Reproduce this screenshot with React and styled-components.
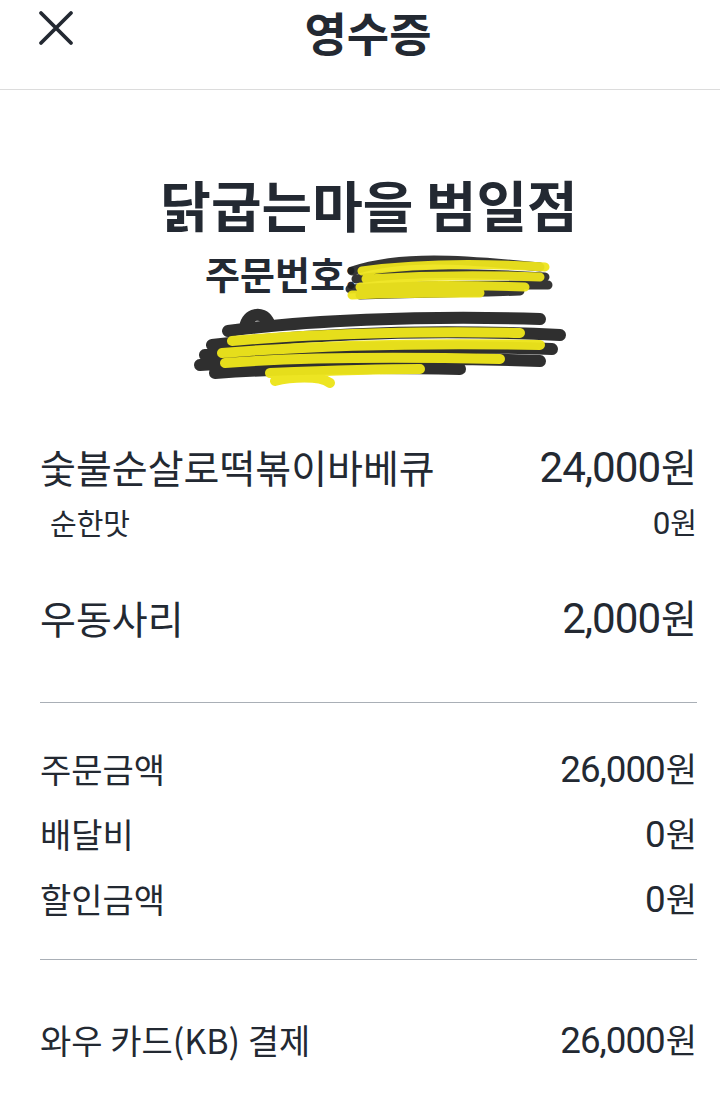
import styled, { createGlobalStyle } from "styled-components";

const Global = createGlobalStyle`
  body {
    margin: 0;
    background: #fff;
    font-family: Roboto, "Noto Sans CJK KR", sans-serif;
    color: #232932;
  }
`;

const Header = styled.header`
  height: 89px;
  border-bottom: 1px solid #dcdcdc;
  display: flex;
  align-items: flex-start;
  position: relative;
`;

const Close = styled.button`
  position: absolute;
  left: 32px;
  top: 4px;
  width: 48px;
  height: 48px;
  border: 0;
  background: none;
  padding: 0;
  display: flex;
  align-items: center;
  justify-content: center;
`;

const Title = styled.h1`
  margin: 0 0 0 16px;
  flex: 1;
  text-align: center;
  font-family: "Noto Sans CJK KR", sans-serif;
  font-weight: 700;
  font-size: 46px;
  line-height: 62px;
`;

const Store = styled.section`
  display: flex;
  flex-direction: column;
  align-items: center;
  padding-top: 77px;
`;

const StoreName = styled.h2`
  margin: 0 0 0 18px;
  font-family: "Noto Sans CJK KR", sans-serif;
  font-weight: 700;
  font-size: 55px;
  line-height: 72px;
`;

const Order = styled.div`
  position: relative;
  width: 720px;
  height: 130px;
`;

const OrderLabel = styled.span`
  position: absolute;
  left: 205px;
  top: 12px;
  font-family: "Noto Sans CJK KR", sans-serif;
  font-weight: 700;
  font-size: 38px;
  line-height: 44px;
`;

const Scribble = styled.svg`
  position: absolute;
  left: 0;
  top: 10px;
`;

const Content = styled.main`
  padding: 69px 23px 0 40px;
`;

const Group = styled.div`
  display: flex;
  flex-direction: column;
  gap: ${(p) => p.$gap || 0}px;
  padding: ${(p) => p.$pad};
  border-bottom: ${(p) => (p.$line ? "1px solid #a9afb6" : "none")};
`;

const Row = styled.div`
  display: flex;
  justify-content: space-between;
  align-items: center;
  height: ${(p) => p.$lh}px;
  font-size: ${(p) => p.$size}px;
  line-height: ${(p) => p.$lh}px;
  padding-left: ${(p) => p.$indent || 0}px;
  font-family: "Noto Sans CJK KR", sans-serif;
  overflow: hidden;
`;

const Price = styled.span`
  display: flex;
  align-items: baseline;
`;

const Num = styled.span`
  font-family: Roboto, "Liberation Sans", sans-serif;
  font-size: 1.08em;
  letter-spacing: -1px;
  margin-right: 1px;
`;

const Item = ({ name, price, size = 36, lh = 50, indent }) => (
  <Row $size={size} $lh={lh} $indent={indent}>
    <span>{name}</span>
    <Price>
      <Num>{price}</Num>원
    </Price>
  </Row>
);

export default function App() {
  return (
    <>
      <Global />
      <Header>
        <Close aria-label="닫기">
          <svg width="36" height="36" viewBox="0 0 36 36">
            <path
              d="M3 3 L33 33 M33 3 L3 33"
              stroke="#232932"
              strokeWidth="3.8"
              strokeLinecap="round"
            />
          </svg>
        </Close>
        <Title>영수증</Title>
      </Header>

      <Store>
        <StoreName>닭굽는마을 범일점</StoreName>
        <Order>
          <OrderLabel>주문번호:</OrderLabel>
          <Scribble width="720" height="140" viewBox="0 0 720 140">
            <g fill="none" strokeLinecap="round" strokeLinejoin="round">
              <path
                d="M352 22 C400 6 460 10 540 18 M356 30 C420 22 480 24 545 28 M350 40 C420 36 480 36 548 36 M360 46 C420 44 470 44 520 42"
                stroke="#1f1f1f"
                strokeWidth="9"
                opacity="0.9"
              />
              <path
                d="M362 22 C420 14 480 14 545 18 M366 30 C430 26 490 26 540 28 M360 38 C420 36 470 36 525 38 M352 46 C400 44 440 44 480 44"
                stroke="#eee51c"
                strokeWidth="9"
                opacity="0.95"
              />
              <path
                d="M245 78 C248 64 262 62 268 72 M228 82 C300 72 420 66 540 70 M212 96 C320 84 440 80 560 86 M205 106 C320 98 440 96 552 100 M200 116 C300 110 420 108 540 112 M215 124 C300 118 380 118 460 120"
                stroke="#1d1d1d"
                strokeWidth="12"
                opacity="0.92"
              />
              <path
                d="M232 92 C320 84 440 82 520 84 M222 104 C320 96 440 94 540 96 M225 114 C300 108 400 108 500 110 M270 124 C320 122 380 120 420 120 M275 132 C290 128 320 126 330 134"
                stroke="#ece41b"
                strokeWidth="10"
                opacity="0.97"
              />
            </g>
          </Scribble>
        </Order>
      </Store>

      <Content>
        <Group $pad="0 0 57px" $line>
          <Item name="숯불순살로떡볶이바베큐" price="24,000" size={39} lh={56} />
          <Item name="순한맛" price="0" size={29} lh={56} indent={10} />
          <Group $pad="39px 0 0">
            <Item name="우동사리" price="2,000" size={39} lh={56} />
          </Group>
        </Group>
        <Group $pad="41px 0 35px" $gap={15} $line>
          <Item name="주문금액" price="26,000" size={34} lh={50} />
          <Item name="배달비" price="0" size={34} lh={50} />
          <Item name="할인금액" price="0" size={34} lh={50} />
        </Group>
        <Group $pad="55px 0 0">
          <Item name="와우 카드(KB) 결제" price="26,000" size={34} lh={50} />
        </Group>
      </Content>
    </>
  );
}
